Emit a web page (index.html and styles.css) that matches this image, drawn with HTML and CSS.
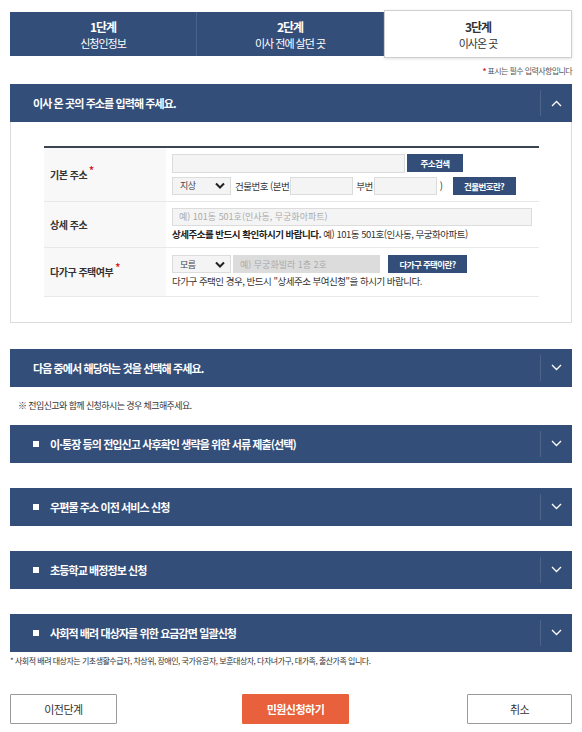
FILE: index.html
```html
<!DOCTYPE html>
<html lang="ko">
<head>
  <meta charset="UTF-8" />
  <meta name="viewport" content="width=device-width, initial-scale=1.0"/>
  <title>전입신고 - 이사온 곳</title>
  <link rel="stylesheet" href="styles.css">
</head>
<body>
  <div class="container">
    <ul class="steps">
      <li class="step"><strong>1단계</strong><span>신청인정보</span></li>
      <li class="step"><strong>2단계</strong><span>이사 전에 살던 곳</span></li>
      <li class="step on"><strong>3단계</strong><span>이사온 곳</span></li>
    </ul>

    <p class="req-note"><em>*</em> 표시는 필수 입력사항입니다</p>

    <div class="acc-head">
      <h2>이사 온 곳의 주소를 입력해 주세요.</h2>
      <span class="acc-btn">
        <svg width="11" height="7" viewBox="0 0 11 7"><polyline points="1,6 5.5,1.5 10,6" fill="none" stroke="#fff" stroke-width="1.3"/></svg>
      </span>
    </div>
    <div class="acc-body">
      <table class="form-table">
        <tr class="row-addr">
          <th>기본 주소<em>*</em></th>
          <td>
            <div class="line">
              <input type="text" class="ipt ipt-addr" />
              <button class="btn-s btn-search">주소검색</button>
            </div>
            <div class="line">
              <div class="sel">지상<svg width="10" height="7" viewBox="0 0 10 7"><polyline points="1,1.5 5,5.5 9,1.5" fill="none" stroke="#222" stroke-width="2"/></svg></div>
              <span class="txt">건물번호 (본번</span>
              <input type="text" class="ipt ipt-num" />
              <span class="txt txt-sub">부번</span>
              <input type="text" class="ipt ipt-num" />
              <span class="txt txt-close">)</span>
              <button class="btn-s btn-bldg">건물번호란?</button>
            </div>
          </td>
        </tr>
        <tr class="row-detail">
          <th>상세 주소</th>
          <td>
            <input type="text" class="ipt ipt-detail" placeholder="예) 101동 501호(인사동, 무궁화아파트)" />
            <p class="hint"><b>상세주소를 반드시 확인하시기 바랍니다.</b> 예) 101동 501호(인사동, 무궁화아파트)</p>
          </td>
        </tr>
        <tr class="row-multi">
          <th>다가구 주택여부<em>*</em></th>
          <td>
            <div class="line">
              <div class="sel">모름<svg width="10" height="7" viewBox="0 0 10 7"><polyline points="1,1.5 5,5.5 9,1.5" fill="none" stroke="#222" stroke-width="2"/></svg></div>
              <input type="text" class="ipt ipt-dis" placeholder="예) 무궁화빌라 1층 2호" disabled />
              <button class="btn-s btn-multi">다가구 주택이란?</button>
            </div>
            <p class="hint">다가구 주택인 경우, 반드시 "상세주소 부여신청"을 하시기 바랍니다.</p>
          </td>
        </tr>
      </table>
    </div>

    <div class="acc-head sec2">
      <h2>다음 중에서 해당하는 것을 선택해 주세요.</h2>
      <span class="acc-btn">
        <svg width="11" height="7" viewBox="0 0 11 7"><polyline points="1,1 5.5,5.5 10,1" fill="none" stroke="#fff" stroke-width="1.3"/></svg>
      </span>
    </div>
    <p class="check-note">※ 전입신고와 함께 신청하시는 경우 체크해주세요.</p>

    <div class="acc-head opt">
      <h2><i class="sq"></i>이·통장 등의 전입신고 사후확인 생략을 위한 서류 제출(선택)</h2>
      <span class="acc-btn">
        <svg width="11" height="7" viewBox="0 0 11 7"><polyline points="1,1 5.5,5.5 10,1" fill="none" stroke="#fff" stroke-width="1.3"/></svg>
      </span>
    </div>
    <div class="acc-head opt">
      <h2><i class="sq"></i>우편물 주소 이전 서비스 신청</h2>
      <span class="acc-btn">
        <svg width="11" height="7" viewBox="0 0 11 7"><polyline points="1,1 5.5,5.5 10,1" fill="none" stroke="#fff" stroke-width="1.3"/></svg>
      </span>
    </div>
    <div class="acc-head opt">
      <h2><i class="sq"></i>초등학교 배정정보 신청</h2>
      <span class="acc-btn">
        <svg width="11" height="7" viewBox="0 0 11 7"><polyline points="1,1 5.5,5.5 10,1" fill="none" stroke="#fff" stroke-width="1.3"/></svg>
      </span>
    </div>
    <div class="acc-head opt">
      <h2><i class="sq"></i>사회적 배려 대상자를 위한 요금감면 일괄신청</h2>
      <span class="acc-btn">
        <svg width="11" height="7" viewBox="0 0 11 7"><polyline points="1,1 5.5,5.5 10,1" fill="none" stroke="#fff" stroke-width="1.3"/></svg>
      </span>
    </div>
    <p class="foot-note">* 사회적 배려 대상자는 기초생활수급자, 차상위, 장애인, 국가유공자, 보훈대상자, 다자녀가구, 대가족, 출산가족 입니다.</p>

    <div class="btn-area">
      <button class="btn btn-prev">이전단계</button>
      <button class="btn btn-submit">민원신청하기</button>
      <button class="btn btn-cancel">취소</button>
    </div>
  </div>
</body>
</html>
```

FILE: styles.css
```css
* {
  box-sizing: border-box;
}

body {
  margin: 0;
  font-family: "Noto Sans CJK KR", "Noto Sans", sans-serif;
  color: #333;
  background: #fff;
}

.container {
  padding: 12px 10px 0;
}

/* 단계 탭 */
.steps {
  display: flex;
  list-style: none;
  margin: 0;
  padding: 0;
  height: 44px;
}

.step {
  flex: 1;
  display: flex;
  flex-direction: column;
  align-items: center;
  justify-content: center;
  background: #344e7a;
  color: #fff;
  border-right: 1px solid #4a6290;
  letter-spacing: -1px;
}

.step strong {
  display: block;
  font-size: 12px;
  line-height: 17px;
}

.step span {
  display: block;
  font-size: 11px;
  line-height: 16px;
}

.step.on {
  background: #fff;
  color: #333;
  border: 1px solid #cfcfcf;
  margin: -2px 0;
  box-shadow: 0 1px 3px rgba(0, 0, 0, 0.12);
}

.req-note {
  margin: 9px 0 0;
  text-align: right;
  font-size: 8px;
  color: #555;
  letter-spacing: -0.6px;
  line-height: 12px;
}

.req-note em,
.form-table th em {
  color: #d21f2b;
  font-style: normal;
  font-weight: bold;
}

/* 아코디언 헤더 */
.acc-head {
  display: flex;
  align-items: center;
  height: 38px;
  margin-top: 7px;
  background: #344e7a;
}

.acc-head h2 {
  flex: 1;
  margin: 0;
  padding-left: 23px;
  font-size: 11px;
  color: #fff;
  letter-spacing: -0.9px;
  display: flex;
  align-items: center;
}

.acc-btn {
  width: 32px;
  height: 26px;
  border-left: 1px solid rgba(255, 255, 255, 0.12);
  display: flex;
  align-items: center;
  justify-content: center;
}

.sq {
  width: 6px;
  height: 6px;
  background: #fff;
  margin-right: 11px;
  margin-top: 1px;
}

.acc-body {
  border: 1px solid #dcdcdc;
  border-top: 0;
  padding: 24px 32px 25px 33px;
}

/* 입력 표 */
.form-table {
  width: 100%;
  border-collapse: collapse;
  border-top: 2px solid #3c4452;
  font-size: 9.5px;
  letter-spacing: -0.5px;
}

.form-table th {
  width: 124px;
  background: #f8f8f8;
  text-align: left;
  padding: 0 0 0 6px;
  font-size: 10px;
  font-weight: bold;
  color: #333;
}

.form-table th em {
  position: relative;
  top: -5px;
  margin-left: 2px;
}

.form-table td {
  padding: 0 7px 0 6px;
  border-bottom: 1px solid #e8e8e8;
}

.form-table tr th {
  border-bottom: 1px solid #e8e8e8;
}

.row-addr td { height: 54px; }
.row-detail td { height: 46px; }
.row-multi td { height: 49px; }

.line {
  display: flex;
  align-items: center;
}

.line + .line {
  margin-top: 4px;
}

.ipt {
  height: 19px;
  border: 1px solid #dcdcdc;
  background: #f4f4f4;
  font-family: inherit;
  font-size: 9px;
  padding: 0 6px;
  margin: 0;
  color: #999;
}

.ipt::placeholder {
  color: #aaa;
}

.ipt-addr { width: 233px; }
.ipt-num { width: 63px; height: 18px; }
.ipt-detail { width: 360px; height: 18px; display: block; }
.ipt-dis { width: 147px; height: 18px; background: #dcdcdc; margin-left: 2px; }

.sel {
  width: 59px;
  height: 18px;
  border: 1px solid #dcdcdc;
  background: #f4f4f4;
  display: flex;
  align-items: center;
  justify-content: space-between;
  padding: 0 5px 0 7px;
  font-size: 9px;
  color: #444;
}

.txt {
  font-size: 9.5px;
  color: #333;
  margin: 0 1px 0 4px;
}

.txt-sub { margin-left: 3px; }
.txt-close { margin: 0 10px 0 3px; }

.btn-s {
  height: 18px;
  border: 0;
  background: #344e7a;
  color: #fff;
  font-family: inherit;
  font-size: 8.5px;
  font-weight: bold;
  letter-spacing: -0.6px;
  padding: 0;
  margin: 0;
}

.btn-search { width: 56px; margin-left: 2px; }
.btn-bldg { width: 63px; }
.btn-multi { width: 79px; margin-left: 8px; }

.hint {
  margin: 2px 0 0;
  font-size: 9.5px;
  line-height: 13px;
  color: #333;
}

.hint b {
  color: #222;
}

.sec2 {
  margin-top: 26px;
}

.check-note {
  margin: 0;
  height: 38px;
  line-height: 38px;
  padding-left: 8px;
  font-size: 9px;
  letter-spacing: -0.6px;
  color: #333;
}

.check-note + .opt {
  margin-top: 0;
}

.opt + .opt {
  margin-top: 25px;
}

.foot-note {
  margin: 4px 0 0;
  font-size: 8px;
  letter-spacing: -0.5px;
  line-height: 10px;
  color: #333;
}

/* 하단 버튼 */
.btn-area {
  display: flex;
  margin-top: 28px;
}

.btn {
  width: 107px;
  height: 30px;
  font-family: inherit;
  font-size: 11px;
  letter-spacing: -0.5px;
  border: 1px solid #9a9a9a;
  background: #fff;
  color: #333;
  border-radius: 1px;
}

.btn-submit {
  margin-left: 125px;
  background: #e8603c;
  border-color: #e8603c;
  color: #fff;
  font-weight: bold;
}

.btn-cancel {
  margin-left: auto;
  width: 105px;
}
```
